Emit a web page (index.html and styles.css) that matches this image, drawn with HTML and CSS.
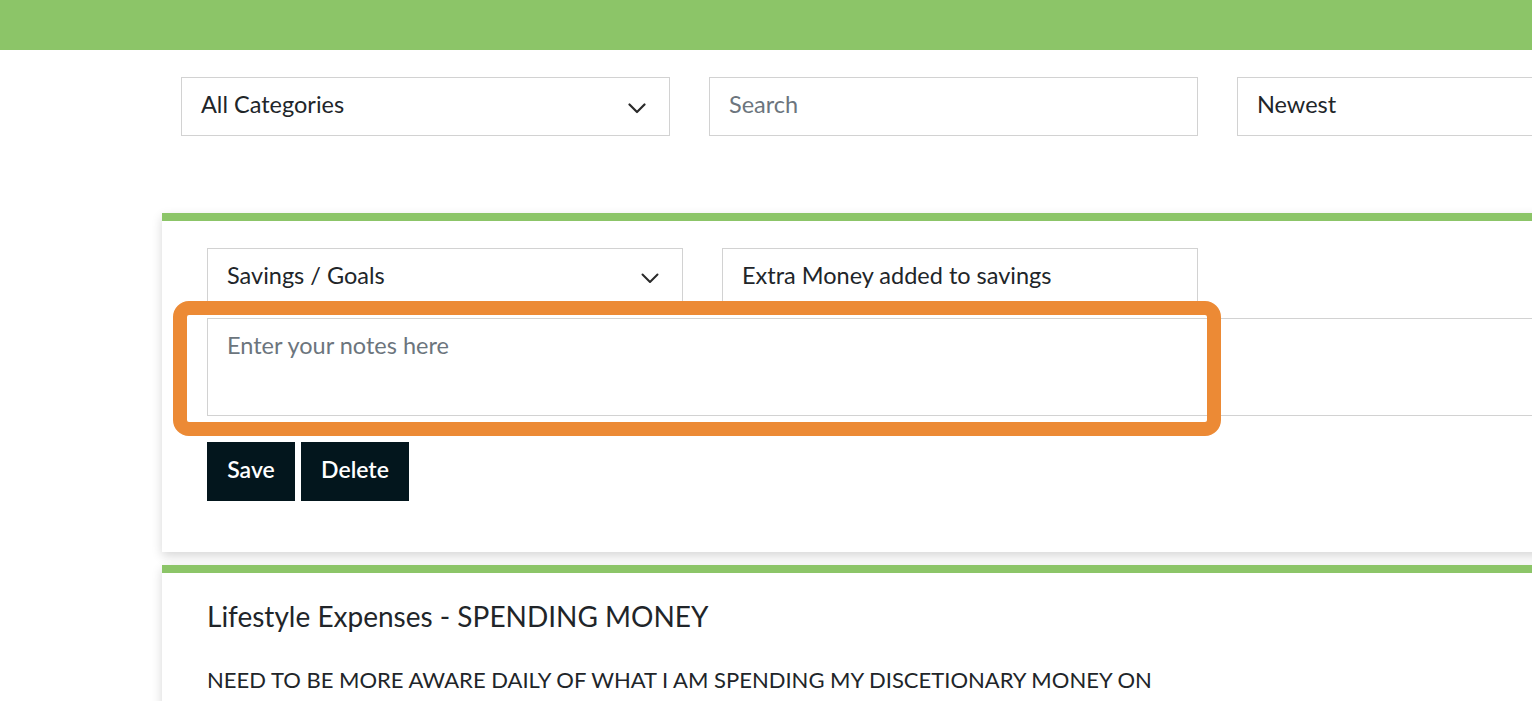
FILE: index.html
```html
<!DOCTYPE html>
<html lang="en">
<head>
<meta charset="utf-8">
<title>Notes</title>
<link rel="stylesheet" href="styles.css">
</head>
<body>
<header class="topbar"></header>
<main class="main">
  <div class="filters">
    <div class="field select-field">
      <span>All Categories</span>
      <svg class="chev" width="18" height="11" viewBox="0 0 18 11"><path d="M1.5 1.5 L9 9 L16.5 1.5" fill="none" stroke="#2a2a2a" stroke-width="2.2" stroke-linecap="round" stroke-linejoin="round"/></svg>
    </div>
    <div class="field"><span class="placeholder">Search</span></div>
    <div class="field"><span>Newest</span></div>
  </div>

  <section class="card edit-card">
    <div class="row">
      <div class="field select-field small">
        <span>Savings / Goals</span>
        <svg class="chev" width="18" height="11" viewBox="0 0 18 11"><path d="M1.5 1.5 L9 9 L16.5 1.5" fill="none" stroke="#2a2a2a" stroke-width="2" stroke-linecap="round" stroke-linejoin="round"/></svg>
      </div>
      <div class="field small"><span>Extra Money added to savings</span></div>
    </div>
    <div class="notes"><span class="placeholder">Enter your notes here</span></div>
    <div class="buttons">
      <button class="btn btn-save">Save</button>
      <button class="btn btn-delete">Delete</button>
    </div>
    <div class="highlight"></div>
  </section>

  <section class="card view-card">
    <h2 class="title">Lifestyle Expenses - SPENDING MONEY</h2>
    <p class="body-text">NEED TO BE MORE AWARE DAILY OF WHAT I AM SPENDING MY DISCETIONARY MONEY ON</p>
  </section>
</main>
</body>
</html>
```

FILE: styles.css
```css
html, body {
  margin: 0;
  padding: 0;
  overflow: hidden;
  background: #ffffff;
}
body {
  font-family: Lato, "Open Sans", "Liberation Sans", sans-serif;
  color: #212529;
  width: 1532px;
  height: 701px;
}
.topbar {
  height: 50px;
  background: #8cc568;
}
.main {
  margin-left: 162px;
  width: 1590px;
}
.filters {
  display: flex;
  gap: 39px;
  padding-left: 19px;
  margin-top: 27px;
}
.field {
  box-sizing: border-box;
  width: 489px;
  height: 59px;
  border: 1px solid #d2d2d2;
  display: flex;
  align-items: center;
  justify-content: space-between;
  padding: 0 23px 5px 19px;
  font-size: 23.5px;
  color: #212529;
  flex: none;
}
.placeholder {
  color: #6c757d;
}
.chev {
  margin-top: 8px;
}
.card {
  position: relative;
  border-top: 8px solid #8cc568;
  background: #fff;
  box-shadow: 0 4px 10px rgba(0, 0, 0, 0.16);
  box-sizing: border-box;
}
.edit-card {
  margin-top: 77px;
  padding: 27px 45px 51px;
}
.row {
  display: flex;
  gap: 39px;
}
.field.small {
  width: 476px;
  height: 58px;
}
.notes {
  box-sizing: border-box;
  margin-top: 12px;
  height: 98px;
  border: 1px solid #d2d2d2;
  padding: 12px 19px;
  font-size: 23.5px;
}
.buttons {
  display: flex;
  gap: 6px;
  margin-top: 26px;
}
.btn {
  height: 59px;
  border: none;
  background: #03161d;
  color: #ffffff;
  font-family: Lato, "Open Sans", "Liberation Sans", sans-serif;
  font-size: 23px;
  font-weight: 600;
  padding: 0 0 5px;
  margin: 0;
}
.btn-save { width: 88px; }
.btn-delete { width: 108px; }
.highlight {
  position: absolute;
  left: 11px;
  top: 80px;
  width: 1048px;
  height: 135px;
  box-sizing: border-box;
  border: 14px solid #ec8a35;
  border-radius: 16px;
  pointer-events: none;
}
.view-card {
  margin-top: 13px;
  padding: 25px 45px 20px;
  height: 200px;
}
.title {
  margin: 0;
  font-size: 28px;
  font-weight: 400;
  line-height: 36px;
  color: #212529;
}
.body-text {
  margin: 31px 0 0;
  font-size: 22px;
  line-height: 30px;
  color: #212529;
}
```
